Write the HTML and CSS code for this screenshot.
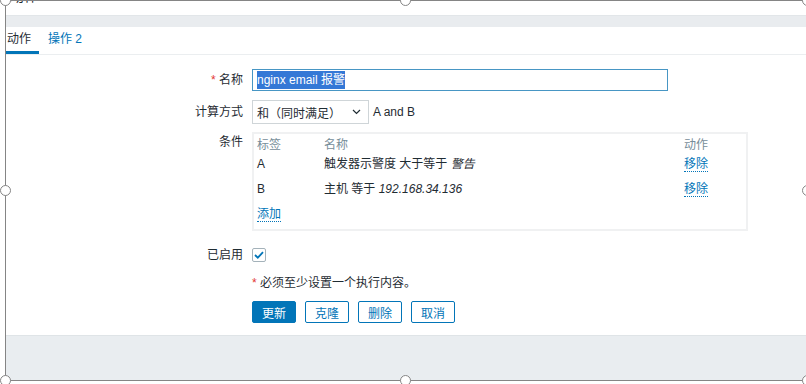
FILE: index.html
```html
<!DOCTYPE html>
<html lang="zh">
  <head>
    <meta charset="UTF-8" />
    <meta name="viewport" content="width=device-width, initial-scale=1.0" />
    <title>动作</title>
    <link rel="stylesheet" href="styles.css">
  </head>
  <body>
    <div class="frame">
      <div class="top-strip"><h2 class="title">动作</h2></div>
      <div class="band"></div>

      <ul class="tabs">
        <li class="tab active">动作</li>
        <li class="tab">操作 2</li>
      </ul>

      <div class="form">
        <div class="form-row row-name">
          <label class="label" for="name-input"><span class="required">*</span> 名称</label>
          <div class="field">
            <div class="text-input" id="name-input"><span class="selected">nginx email 报警</span></div>
          </div>
        </div>

        <div class="form-row row-calc">
          <label class="label">计算方式</label>
          <div class="field inline">
            <div class="select">
              <span>和（同时满足）</span>
              <svg class="chevron" width="9" height="6" viewBox="0 0 9 6"><path d="M1 1l3.5 3.5L8 1" fill="none" stroke="#1f2c33" stroke-width="1.2"/></svg>
            </div>
            <span class="formula">A and B</span>
          </div>
        </div>

        <div class="form-row row-cond">
          <label class="label label-top">条件</label>
          <div class="field">
            <div class="cond-table">
              <div class="cond-line head">
                <span>标签</span><span>名称</span><span>动作</span>
              </div>
              <div class="cond-line">
                <span>A</span><span>触发器示警度 大于等于 <i>警告</i></span><span><a class="link">移除</a></span>
              </div>
              <div class="cond-line">
                <span>B</span><span>主机 等于 <i>192.168.34.136</i></span><span><a class="link">移除</a></span>
              </div>
              <div class="cond-line">
                <span><a class="link">添加</a></span>
              </div>
            </div>
          </div>
        </div>

        <div class="form-row row-enabled">
          <label class="label">已启用</label>
          <div class="field inline">
            <span class="checkbox">
              <svg width="10" height="8" viewBox="0 0 10 8"><path d="M1 4l2.8 2.7L9 1.2" fill="none" stroke="#0275b8" stroke-width="1.8"/></svg>
            </span>
          </div>
        </div>

        <div class="form-row row-note">
          <span class="label"></span>
          <div class="field note"><span class="required">*</span> 必须至少设置一个执行内容。</div>
        </div>

        <div class="form-row row-buttons">
          <span class="label"></span>
          <div class="field buttons">
            <button class="btn primary">更新</button>
            <button class="btn">克隆</button>
            <button class="btn">删除</button>
            <button class="btn">取消</button>
          </div>
        </div>
      </div>

      <div class="footer-band"></div>
    </div>

    <!-- selection handles -->
    <span class="handle" style="left: 5px; top: 0;"></span>
    <span class="handle" style="left: 405px; top: 0;"></span>
    <span class="handle" style="left: 807px; top: 0;"></span>
    <span class="handle" style="left: 5px; top: 190px;"></span>
    <span class="handle" style="left: 807px; top: 190px;"></span>
    <span class="handle" style="left: 5px; top: 380px;"></span>
    <span class="handle" style="left: 405px; top: 380px;"></span>
    <span class="handle" style="left: 807px; top: 380px;"></span>
  </body>
</html>
```

FILE: styles.css
```css
/* Reset */
* {
  margin: 0;
  padding: 0;
  box-sizing: border-box;
}

body {
  font-family: 'Liberation Sans', Arial, 'Noto Sans CJK SC', sans-serif;
  font-size: 12px;
  color: #1f2c33;
  background-color: #fff;
  width: 806px;
  height: 384px;
  overflow: hidden;
  position: relative;
}

/* Editor frame */
.frame {
  margin-left: 5px;
  width: 820px;
  height: 381px;
  border-left: 1px solid #858585;
  border-top: 1px solid #858585;
  border-bottom: 1px solid #858585;
  display: flex;
  flex-direction: column;
}

.top-strip {
  height: 14px;
  overflow: hidden;
}

.title {
  font-size: 14px;
  font-weight: normal;
  line-height: 16px;
  margin-top: -13px;
  padding-left: 4px;
}

.band {
  height: 12px;
  background-color: #e9ecef;
  border-top: 1px solid #e2e6e9;
}

/* Tabs */
.tabs {
  list-style: none;
  display: flex;
  height: 28px;
  border-bottom: 1px solid #ebeef0;
}

.tab {
  padding: 0 9px;
  line-height: 25px;
  color: #0275b8;
  border-bottom: 3px solid transparent;
}

.tab.active {
  padding-left: 1px;
  padding-right: 8px;
  color: #1f2c33;
  border-bottom-color: #0275b8;
}

/* Form */
.form {
  padding: 14px 0 12px;
}

.form-row {
  display: grid;
  grid-template-columns: 237px 1fr;
  column-gap: 9px;
  align-items: center;
}

.label {
  text-align: right;
  line-height: 16px;
}

.label-top {
  align-self: start;
  margin-top: 2px;
}

.required {
  color: #e33734;
}

.row-name { margin-bottom: 9px; }
.row-calc { margin-bottom: 8px; }
.row-cond { margin-bottom: 13px; }
.row-enabled { margin-bottom: 9px; height: 22px; }
.row-note { margin-bottom: 10px; line-height: 16px; }

.inline {
  display: flex;
  align-items: center;
}

.text-input {
  width: 416px;
  height: 22px;
  border: 1px solid #4796c4;
  padding: 0 4px;
  line-height: 20px;
}

.selected {
  background-color: #3478d6;
  color: #fff;
  padding: 2px 0;
}

.select {
  width: 117px;
  height: 24px;
  border: 1px solid #cfd5d8;
  padding: 0 7px 0 4px;
  display: flex;
  align-items: center;
  justify-content: space-between;
}

.formula {
  margin-left: 4px;
}

/* Conditions table */
.cond-table {
  width: 496px;
  height: 99px;
  border: 2px solid #f0f1f2;
  padding: 2px 3px;
}

.cond-line {
  display: grid;
  grid-template-columns: 67px 1fr 59px;
  line-height: 25px;
}

.cond-line.head {
  line-height: 14px;
  margin-top: 2px;
  color: #768d99;
}

.cond-line i {
  font-style: italic;
}

.link {
  color: #0275b8;
  border-bottom: 1px dotted #0275b8;
  line-height: 14px;
}

/* Checkbox */
.checkbox {
  width: 14px;
  height: 14px;
  border: 1px solid #a4b2ba;
  border-radius: 2px;
  display: flex;
  align-items: center;
  justify-content: center;
}

/* Buttons */
.buttons {
  display: flex;
  gap: 9px;
}

.btn {
  width: 44px;
  height: 22px;
  font-family: inherit;
  font-size: 12px;
  color: #0275b8;
  background-color: #fff;
  border: 1px solid #0275b8;
  border-radius: 2px;
}

.btn.primary {
  background-color: #0275b8;
  color: #fff;
}

.footer-band {
  flex: 1;
  background-color: #e9edf0;
  border-top: 1px solid #dfe4e7;
}

/* Crop handles */
.handle {
  position: absolute;
  width: 11px;
  height: 11px;
  margin: -5px 0 0 -5px;
  border: 1px solid #858585;
  border-radius: 50%;
  background-color: #fff;
}
```
